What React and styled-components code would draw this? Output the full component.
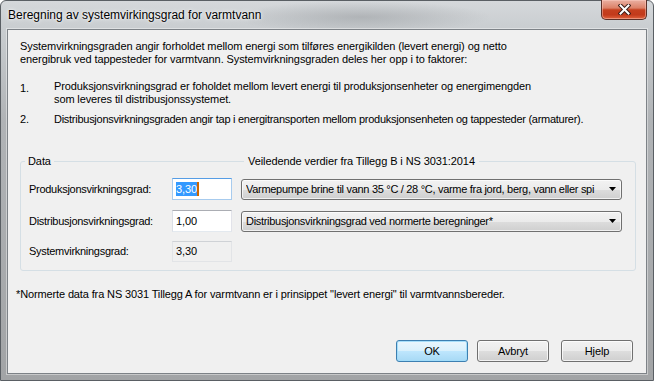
import React from 'react';
import styled, { createGlobalStyle } from 'styled-components';

const Global = createGlobalStyle`
  html, body { margin: 0; padding: 0; background: #fff; }
  body {
    width: 654px; height: 381px; overflow: hidden;
    font-family: "Liberation Sans", Arial, sans-serif;
  }
  * { box-sizing: border-box; }
`;

const Window = styled.div`
  width: 654px;
  height: 381px;
  border: 1px solid #5a5f64;
  border-radius: 6px 6px 0 0;
  background:
    radial-gradient(ellipse 130px 16px at 360px 16px, rgba(120,124,128,0.35), rgba(120,124,128,0) 100%),
    linear-gradient(to bottom, #d5d8db 0px, #c9cdd0 28px, #b0b3b6 120px, #a2a4a6 100%);
  padding: 0 6px 6px;
  display: flex;
  flex-direction: column;
`;

const TitleBar = styled.div`
  height: 28px;
  flex-shrink: 0;
  display: flex;
  align-items: flex-start;
  justify-content: space-between;
`;

const Title = styled.span`
  margin: 7px 0 0 1px;
  font: 12px/15px "Liberation Sans", Arial, sans-serif;
  color: #000;
  text-shadow: 0 0 5px rgba(255,255,255,0.9), 0 0 2px rgba(255,255,255,0.9);
`;

const CloseButton = styled.div`
  width: 46px;
  height: 20px;
  margin-top: -1px;
  border: 1px solid #5b3028;
  border-top: none;
  border-radius: 0 0 5px 5px;
  background: linear-gradient(to bottom, #eab0a2 0%, #dc8168 42%, #c5401f 52%, #c23a1b 78%, #e0633e 100%);
  box-shadow: inset 0 0 0 1px rgba(255,210,200,0.45);
  display: flex;
  align-items: center;
  justify-content: center;
`;

const Client = styled.div`
  flex: 1;
  border: 1px solid #7d8287;
  background: #f0f0f0;
  box-shadow: 0 0 0 1px rgba(255,255,255,0.4);
  display: flex;
  flex-direction: column;
  padding: 10px 10px 11px 12px;
  font-size: 11px;
  line-height: 13px;
  letter-spacing: -0.09px;
  color: #000;
`;

const Paragraph = styled.p`
  margin: 0;
  white-space: nowrap;
`;

const List = styled.div`
  margin-top: 14px;
  display: flex;
  flex-direction: column;
  gap: 7px;
`;

const ListItem = styled.div`
  display: grid;
  grid-template-columns: 34px 1fr;
  white-space: nowrap;
`;

const ListNumber = styled.span`
  padding-top: ${p => p.$drop}px;
`;

const ListText = styled.span`
  letter-spacing: ${p => p.$ls}px;
`;

const GroupBox = styled.div`
  margin-top: 35px;
  border: 1px solid #d5dfe5;
  border-radius: 3px;
  padding: 0 13px 8px 8px;
`;

const Grid = styled.div`
  display: grid;
  grid-template-columns: 143px 69px 1fr;
  align-items: center;
`;

const Header = styled(Grid)`
  margin-top: -7px;
  height: 13px;
  margin-bottom: 10px;
`;

const Legend = styled.span`
  justify-self: start;
  background: #f0f0f0;
  padding: 0 ${p => p.$pad}px;
  margin-left: ${p => p.$ml}px;
  white-space: nowrap;
`;

const Row = styled(Grid)`
  height: ${p => p.$h}px;
  margin-top: ${p => p.$mt}px;
`;

const FieldLabel = styled.span`
  white-space: nowrap;
  letter-spacing: -0.28px;
`;

const TextBox = styled.div`
  width: 60px;
  height: ${p => p.$h}px;
  padding-left: 3px;
  display: flex;
  align-items: center;
  background: ${p => (p.$readOnly ? '#f0f0f0' : '#fff')};
  border: 1px solid;
  border-color: ${p =>
    p.$focused
      ? '#569de5 #a7cbee #a7cbee #a7cbee'
      : p.$readOnly
      ? '#cfd2d6 #e2e4e7 #e2e4e7 #e2e4e7'
      : '#abadb3 #e2e3ea #e3e9ef #dbdfe6'};
`;

const Selected = styled.span`
  background: #3399ff;
  color: #fff;
  line-height: 14px;
`;

const Caret = styled.span`
  display: inline-block;
  width: 2px;
  height: 14px;
  background: #cc6600;
`;

const Combo = styled.div`
  height: 21px;
  border: 1px solid #707070;
  border-radius: 3px;
  background: linear-gradient(to bottom, #f2f2f2 0%, #ebebeb 50%, #dddddd 51%, #cfcfcf 100%);
  box-shadow: inset 0 0 0 1px rgba(255,255,255,0.7);
  display: flex;
  align-items: center;
  padding: 0 5px 0 4px;
  gap: 6px;
`;

const ComboText = styled.span`
  flex: 1;
  min-width: 0;
  overflow: hidden;
  white-space: nowrap;
  letter-spacing: -0.3px;
`;

const Arrow = styled.svg`
  flex-shrink: 0;
  width: 7px;
  height: 4px;
`;

const Footnote = styled.p`
  margin: 17px 0 0 -4px;
  white-space: nowrap;
  letter-spacing: -0.13px;
`;

const ButtonRow = styled.div`
  margin-top: auto;
  display: flex;
  justify-content: flex-end;
  gap: 9px;
  padding-right: 3px;
`;

const Button = styled.button`
  width: 72px;
  height: 22px;
  margin: 0 0 0 ${p => p.$ml || 0}px;
  padding: 0;
  font: 11px "Liberation Sans", Arial, sans-serif;
  letter-spacing: -0.15px;
  color: #000;
  border-radius: 3px;
  border: 1px solid ${p => (p.$default ? '#3c7fb1' : '#707070')};
  background: ${p =>
    p.$default
      ? 'linear-gradient(to bottom, #eaf6fd 0%, #d9f0fc 50%, #bee6fd 51%, #a7d9f5 100%)'
      : 'linear-gradient(to bottom, #f2f2f2 0%, #ebebeb 50%, #dddddd 51%, #cfcfcf 100%)'};
  box-shadow: inset 0 0 0 1px ${p => (p.$default ? 'rgba(160,220,250,0.9)' : 'rgba(255,255,255,0.75)')};
`;

const ComboArrow = () => (
  <Arrow viewBox="0 0 7 4">
    <path d="M0 0H7L3.5 4Z" fill="#000" />
  </Arrow>
);

export default function App() {
  return (
    <>
      <Global />
      <Window>
        <TitleBar>
          <Title>Beregning av systemvirkingsgrad for varmtvann</Title>
          <CloseButton>
            <svg width="13" height="11" viewBox="0 0 13 11">
              <path d="M2.5 1.5L10.5 9.5M10.5 1.5L2.5 9.5" stroke="#3b1d18" strokeWidth="4" strokeLinecap="square" />
              <path d="M2.5 1.5L10.5 9.5M10.5 1.5L2.5 9.5" stroke="#fff" strokeWidth="2" strokeLinecap="square" />
            </svg>
          </CloseButton>
        </TitleBar>
        <Client>
          <Paragraph>
            Systemvirkningsgraden angir forholdet mellom energi som tilføres energikilden (levert energi) og netto
            <br />
            energibruk ved tappesteder for varmtvann. Systemvirkningsgraden deles her opp i to faktorer:
          </Paragraph>
          <List>
            <ListItem>
              <ListNumber $drop={2}>1.</ListNumber>
              <ListText $ls={-0.12}>
                Produksjonsvirkningsgrad er foholdet mellom levert energi til produksjonsenheter og energimengden
                <br />
                som leveres til distribusjonssystemet.
              </ListText>
            </ListItem>
            <ListItem>
              <ListNumber $drop={0}>2.</ListNumber>
              <ListText $ls={-0.27}>Distribusjonsvirkningsgraden angir tap i energitransporten mellom produksjonsenheten og tappesteder (armaturer).</ListText>
            </ListItem>
          </List>
          <GroupBox>
            <Header>
              <Legend $pad={3} $ml={-4}>Data</Legend>
              <span />
              <Legend $pad={4} $ml={3}>Veiledende verdier fra Tillegg B i NS 3031:2014</Legend>
            </Header>
            <Row $h={22} $mt={0}>
              <FieldLabel>Produksjonsvirkningsgrad:</FieldLabel>
              <TextBox $h={22} $focused>
                <Selected>3,30</Selected>
                <Caret />
              </TextBox>
              <Combo>
                <ComboText>Varmepumpe brine til vann 35 °C / 28 °C, varme fra jord, berg, vann eller spi</ComboText>
                <ComboArrow />
              </Combo>
            </Row>
            <Row $h={22} $mt={10}>
              <FieldLabel>Distribusjonsvirkningsgrad:</FieldLabel>
              <TextBox $h={22}>1,00</TextBox>
              <Combo>
                <ComboText>Distribusjonsvirkningsgrad ved normerte beregninger*</ComboText>
                <ComboArrow />
              </Combo>
            </Row>
            <Row $h={21} $mt={9}>
              <FieldLabel>Systemvirkningsgrad:</FieldLabel>
              <TextBox $h={21} $readOnly>3,30</TextBox>
              <span />
            </Row>
          </GroupBox>
          <Footnote>
            *Normerte data fra NS 3031 Tillegg A for varmtvann er i prinsippet "levert energi" til varmtvannsbereder.
          </Footnote>
          <ButtonRow>
            <Button $default>OK</Button>
            <Button>Avbryt</Button>
            <Button $ml={3}>Hjelp</Button>
          </ButtonRow>
        </Client>
      </Window>
    </>
  );
}
